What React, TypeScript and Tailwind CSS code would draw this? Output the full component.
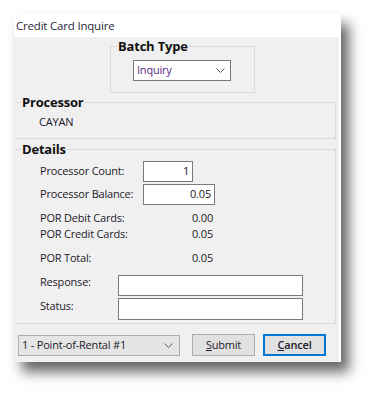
import React from "react";

const Chevron = () => (
  <svg width="9" height="5" viewBox="0 0 9 5" className="shrink-0">
    <polyline points="0.5,0.5 4.5,4.5 8.5,0.5" fill="none" stroke="#606060" strokeWidth="1" />
  </svg>
);

const Legend = ({ children }: { children: React.ReactNode }) => (
  <legend className="ml-[6px] px-[1px] text-[13px] leading-[18px] font-bold text-[#111] tracking-[-0.2px]">{children}</legend>
);

export default function App() {
  return (
    <div
      className="w-[376px] h-[395px] bg-white pl-[14px] pt-[14px] text-[11px] tracking-[-0.2px] text-[#1c1a2a]"
      style={{ fontFamily: '"Open Sans", "Noto Sans", sans-serif' }}
    >
      <div className="w-[327px] bg-[#f0f0f0] border-r-2 border-white shadow-[8px_10px_12px_rgba(0,0,0,0.6)]">
        <div className="h-[23px] bg-white pl-[2px] flex items-center text-[11.5px] text-[#2a1f3a]">
          Credit Card Inquire
        </div>
        <div className="pb-[6px]">
          <fieldset className="ml-[96px] w-[145px] border border-[#dadada] h-[56px] px-0 pb-0">
            <Legend>Batch Type</Legend>
            <div className="ml-[22px] mt-[5px] w-[98px] h-[21px] bg-white border border-[#7a7a7a] flex items-center justify-between pl-[3px] pr-[5px] text-[#5b2a86]">
              <span>Inquiry</span>
              <Chevron />
            </div>
          </fieldset>
          <fieldset className="ml-[1px] w-[321px] border border-l-0 border-[#dadada] h-[46px] px-0">
            <Legend>Processor</Legend>
            <div className="pl-[24px] leading-[16px] mt-[3px]">CAYAN</div>
          </fieldset>
          <fieldset className="ml-[1px] mt-[1px] w-[321px] border border-l-0 border-[#dadada] h-[184px] px-0">
            <Legend>Details</Legend>
            <div className="pl-[25px] flex flex-col">
              <div className="mt-[3px] flex items-center h-[21px]">
                <span className="w-[103px]">Processor Count:</span>
                <div className="w-[50px] h-[21px] bg-white border border-[#7a7a7a] flex items-center justify-end pr-[3px]">1</div>
              </div>
              <div className="mt-[2px] flex items-center h-[21px]">
                <span className="w-[103px]">Processor Balance:</span>
                <div className="w-[72px] h-[21px] bg-white border border-[#7a7a7a] flex items-center justify-end pr-[3px]">0.05</div>
              </div>
              <div className="mt-[5px] flex items-center h-[16px]">
                <span className="w-[103px]">POR Debit Cards:</span>
                <span className="w-[70px] text-right">0.00</span>
              </div>
              <div className="flex items-center h-[16px]">
                <span className="w-[103px]">POR Credit Cards:</span>
                <span className="w-[70px] text-right">0.05</span>
              </div>
              <div className="mt-[8px] flex items-center h-[16px]">
                <span className="w-[103px]">POR Total:</span>
                <span className="w-[70px] text-right">0.05</span>
              </div>
              <div className="mt-[9px] flex items-start h-[21px]">
                <span className="w-[78px] leading-[14px]">Response:</span>
                <div className="w-[185px] h-[21px] bg-white border border-[#7a7a7a]" />
              </div>
              <div className="mt-[2px] flex items-start h-[22px]">
                <span className="w-[78px] leading-[16px]">Status:</span>
                <div className="w-[185px] h-[22px] bg-white border border-[#7a7a7a]" />
              </div>
            </div>
          </fieldset>
          <div className="mt-[10px] flex items-center pl-[4px]">
            <div className="w-[162px] h-[21px] bg-[#e5e5e5] border border-[#adadad] flex items-center justify-between pl-[3px] pr-[6px]">
              <span>1 - Point-of-Rental #1</span>
              <Chevron />
            </div>
            <button className="ml-[12px] w-[63px] h-[22px] bg-[#e1e1e1] border border-[#adadad] flex items-center justify-center">
              <span><span className="underline">S</span>ubmit</span>
            </button>
            <button className="ml-[8px] w-[63px] h-[22px] bg-[#e1e1e1] border-2 border-[#0078d7] flex items-center justify-center font-semibold">
              <span><span className="underline">C</span>ancel</span>
            </button>
          </div>
        </div>
      </div>
    </div>
  );
}
